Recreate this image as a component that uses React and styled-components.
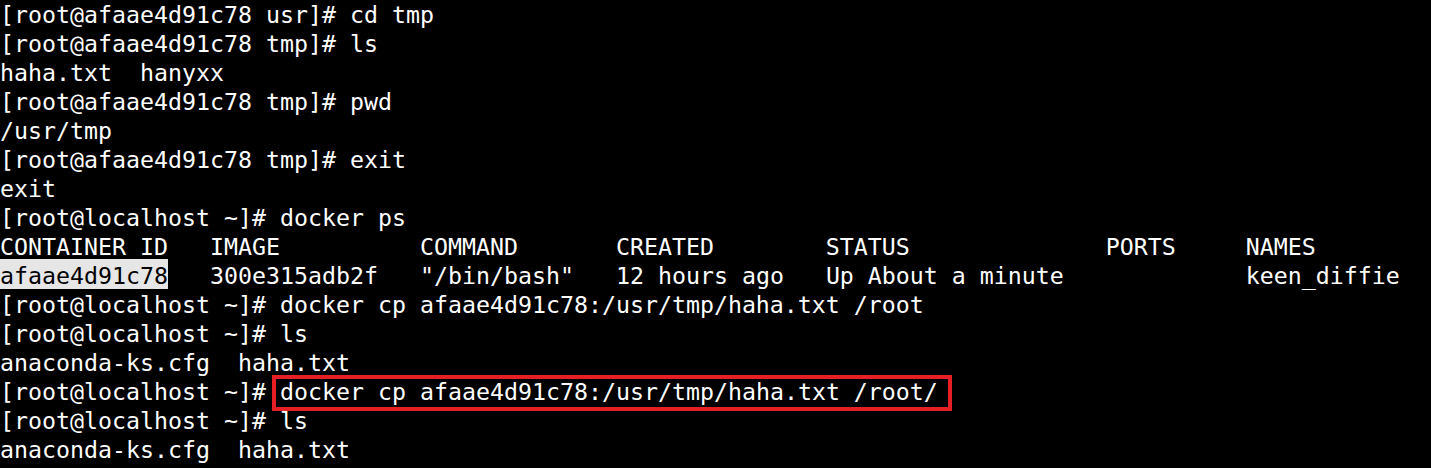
import styled, { createGlobalStyle } from 'styled-components';

const GlobalStyle = createGlobalStyle`
  html, body {
    margin: 0;
    padding: 0;
    background: #000;
    overflow: hidden;
  }
`;

const lines = [
  '[root@afaae4d91c78 usr]# cd tmp',
  '[root@afaae4d91c78 tmp]# ls',
  'haha.txt  hanyxx',
  '[root@afaae4d91c78 tmp]# pwd',
  '/usr/tmp',
  '[root@afaae4d91c78 tmp]# exit',
  'exit',
  '[root@localhost ~]# docker ps',
  'CONTAINER ID   IMAGE          COMMAND       CREATED        STATUS              PORTS     NAMES',
];

function App() {
  return (
    <>
      <GlobalStyle />
      <Terminal>
        {lines.map((line, i) => (
          <Line key={i}>{line}</Line>
        ))}
        <Line>
          <Selected>afaae4d91c78</Selected>
          {'   300e315adb2f   "/bin/bash"   12 hours ago   Up About a minute             keen_diffie'}
        </Line>
        <Line>[root@localhost ~]# docker cp afaae4d91c78:/usr/tmp/haha.txt /root</Line>
        <Line>[root@localhost ~]# ls</Line>
        <Line>anaconda-ks.cfg  haha.txt</Line>
        <Line>
          {'[root@localhost ~]# '}
          <Marked>docker cp afaae4d91c78:/usr/tmp/haha.txt /root/</Marked>
        </Line>
        <Line>[root@localhost ~]# ls</Line>
        <Line>anaconda-ks.cfg  haha.txt</Line>
      </Terminal>
    </>
  );
}

const Terminal = styled.div`
  width: 1431px;
  height: 468px;
  box-sizing: border-box;
  background: #000;
  color: #fff;
  font-family: 'DejaVu Sans Mono', monospace;
  font-size: 23.25px;
  line-height: 29px;
`;

const Line = styled.div`
  white-space: pre;
  height: 29px;
`;

const Selected = styled.span`
  padding-top: 3px;
  background: #e6e6e6;
  color: #000;
`;

const Marked = styled.span`
  position: relative;

  &::after {
    content: '';
    position: absolute;
    left: -8px;
    right: -14px;
    top: -3px;
    bottom: -6px;
    border: 4px solid #e61e25;
  }
`;

export default App;
